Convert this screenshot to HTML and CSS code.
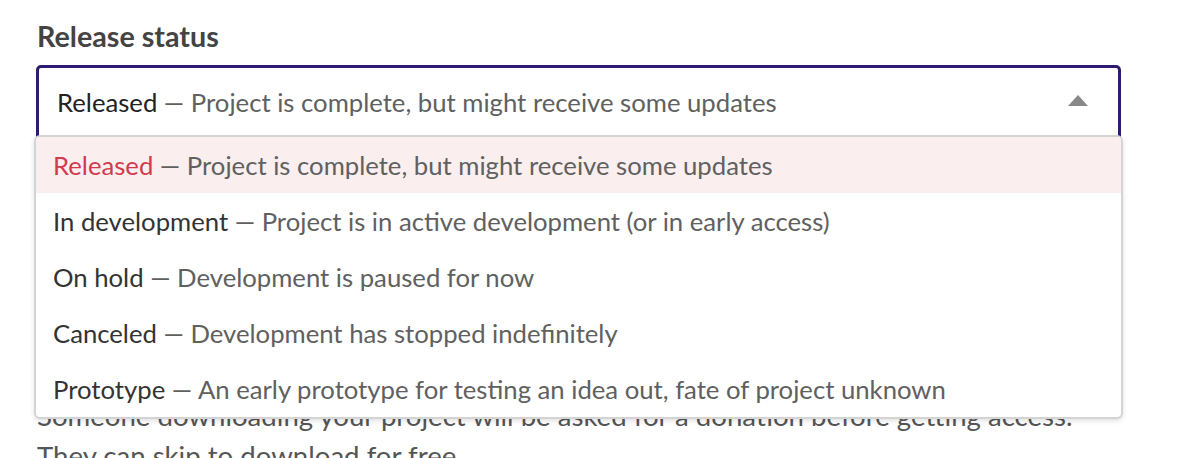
FILE: index.html
```html
<!DOCTYPE html>
<html lang="en">
<head>
<meta charset="utf-8">
<title>Release status</title>
<link rel="stylesheet" href="styles.css">
</head>
<body>
<div class="page">
  <div class="field">
    <div class="label">Release status</div>
    <div class="select-wrap">
      <div class="select">
        <span class="value"><span class="title">Released</span><span class="desc"> — Project is complete, but might receive some updates</span></span>
        <svg class="arrow" width="20" height="11" viewBox="0 0 20 11"><path d="M10 0 L20 11 L0 11 Z" fill="#888"/></svg>
      </div>
      <ul class="dropdown">
        <li class="option active"><span class="text"><span class="title">Released</span><span class="desc"> — Project is complete, but might receive some updates</span></span></li>
        <li class="option"><span class="text"><span class="title">In development</span><span class="desc"> — Project is in active development (or in early access)</span></span></li>
        <li class="option"><span class="text"><span class="title">On hold</span><span class="desc"> — Development is paused for now</span></span></li>
        <li class="option"><span class="text"><span class="title">Canceled</span><span class="desc"> — Development has stopped indefinitely</span></span></li>
        <li class="option"><span class="text"><span class="title">Prototype</span><span class="desc"> — An early prototype for testing an idea out, fate of project unknown</span></span></li>
      </ul>
    </div>
  </div>
  <p class="hint">Someone downloading your project will be asked for a donation before getting access. They can skip to download for free.</p>
</div>
</body>
</html>
```

FILE: styles.css
```css
html, body {
  margin: 0;
  padding: 0;
  background: #fff;
}
body {
  font-family: Lato, "Open Sans", sans-serif;
  color: #434343;
}
.page {
  padding: 19px 75px 0 36px;
  width: 1085px;
}
.label {
  font-weight: 700;
  font-size: 28.7px;
  line-height: 34px;
  color: #434343;
  margin-left: 1px;
  margin-bottom: 12px;
}
.select-wrap {
  position: relative;
}
.select {
  height: 76px;
  box-sizing: border-box;
  border: 3px solid #301a70;
  border-radius: 5px;
  display: flex;
  align-items: center;
  justify-content: space-between;
  padding: 0 30px 0 18px;
  font-size: 25.7px;
}
.select .value {
  position: relative;
  top: -1px;
}
.select .title {
  color: #222;
}
.desc {
  color: #606060;
}
.arrow {
  display: block;
  position: relative;
  top: -3px;
}
.dropdown {
  position: absolute;
  left: -2px;
  top: 70px;
  width: 1089px;
  box-sizing: border-box;
  margin: 0;
  padding: 0;
  list-style: none;
  background: #fff;
  border: 2px solid #d4d4d4;
  border-radius: 6px;
  box-shadow: 0 2px 5px rgba(0, 0, 0, 0.12);
  overflow: hidden;
  font-size: 25.7px;
}
.option {
  height: 56px;
  display: flex;
  align-items: center;
  padding-left: 17px;
}
.option .title {
  color: #333;
}
.option.active {
  background: #fbeeee;
}
.option.active .title {
  color: #d13b4c;
}
.hint {
  margin: 255px 0 0 1px;
  font-size: 27.6px;
  line-height: 40px;
  color: #555;
}
```
